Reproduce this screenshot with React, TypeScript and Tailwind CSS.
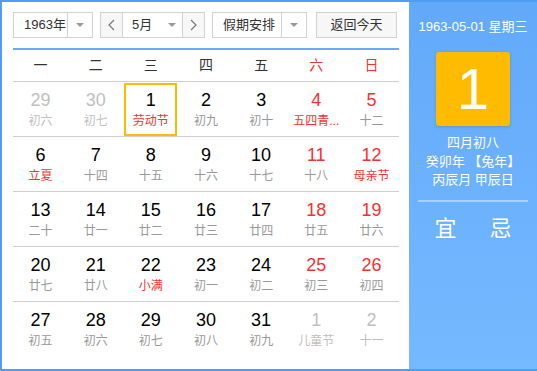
import React from "react";

type Day = {
  d: number;
  lunar: string;
  other?: boolean;
  red?: boolean;
  festival?: boolean;
  selected?: boolean;
};

const weekdays = ["一", "二", "三", "四", "五", "六", "日"];

const rows: Day[][] = [
  [
    { d: 29, lunar: "初六", other: true },
    { d: 30, lunar: "初七", other: true },
    { d: 1, lunar: "劳动节", festival: true, selected: true },
    { d: 2, lunar: "初九" },
    { d: 3, lunar: "初十" },
    { d: 4, lunar: "五四青...", red: true, festival: true },
    { d: 5, lunar: "十二", red: true },
  ],
  [
    { d: 6, lunar: "立夏", festival: true },
    { d: 7, lunar: "十四" },
    { d: 8, lunar: "十五" },
    { d: 9, lunar: "十六" },
    { d: 10, lunar: "十七" },
    { d: 11, lunar: "十八", red: true },
    { d: 12, lunar: "母亲节", red: true, festival: true },
  ],
  [
    { d: 13, lunar: "二十" },
    { d: 14, lunar: "廿一" },
    { d: 15, lunar: "廿二" },
    { d: 16, lunar: "廿三" },
    { d: 17, lunar: "廿四" },
    { d: 18, lunar: "廿五", red: true },
    { d: 19, lunar: "廿六", red: true },
  ],
  [
    { d: 20, lunar: "廿七" },
    { d: 21, lunar: "廿八" },
    { d: 22, lunar: "小满", festival: true },
    { d: 23, lunar: "初一" },
    { d: 24, lunar: "初二" },
    { d: 25, lunar: "初三", red: true },
    { d: 26, lunar: "初四", red: true },
  ],
  [
    { d: 27, lunar: "初五" },
    { d: 28, lunar: "初六" },
    { d: 29, lunar: "初七" },
    { d: 30, lunar: "初八" },
    { d: 31, lunar: "初九" },
    { d: 1, lunar: "儿童节", other: true },
    { d: 2, lunar: "十一", other: true },
  ],
];

const Caret = () => (
  <span className="w-0 h-0 border-x-[4px] border-x-transparent border-t-[4px] border-t-[#9a9a9a]" />
);

function Cell({ day }: { day: Day }) {
  const numColor = day.other
    ? "text-[#bfbfbf]"
    : day.red
    ? "text-[#f73131]"
    : "text-black";
  const lunarColor = day.other
    ? "text-[#bfbfbf]"
    : day.festival
    ? "text-[#f73131]"
    : "text-[#999]";
  return (
    <div className="flex items-center justify-center h-[54px] px-px">
      <div
        className={`flex flex-col items-center justify-center w-full h-[53px] ${
          day.selected ? "border-2 border-[#ffbb00]" : ""
        }`}
      >
        <span className={`text-[18px] leading-[22px] ${numColor}`}>{day.d}</span>
        <span className={`text-[12px] leading-[16px] mt-[2px] ${lunarColor}`}>
          {day.lunar}
        </span>
      </div>
    </div>
  );
}

export default function App() {
  return (
    <div
      className="w-[537px] h-[371px] flex border-y-2 border-l-2 border-[#4e9ef7] bg-white"
      style={{ fontFamily: '"Liberation Sans", "Noto Sans CJK SC", sans-serif' }}
    >
      {/* Left: calendar grid */}
      <div className="w-[407px] pl-[11px] pr-[10px] pt-[10px]">
        <div className="flex items-center h-[26px] text-[13px] text-[#333]">
          <div className="flex w-[80px] h-full border border-[#d2d2d2] bg-white">
            <span className="flex-1 flex items-center pl-[10px]">1963年</span>
            <span className="w-[25px] flex items-center justify-center border-l border-[#d2d2d2]">
              <Caret />
            </span>
          </div>
          <div className="flex w-[105px] h-full ml-[7px] border border-[#d2d2d2] bg-white">
            <span className="w-[22px] flex items-center justify-center bg-[#f7f7f7] border-r border-[#d2d2d2]">
              <svg width="7" height="12" viewBox="0 0 7 12" fill="none" stroke="#777" strokeWidth="1.2">
                <path d="M6 1L1 6l5 5" />
              </svg>
            </span>
            <span className="flex-1 flex items-center pl-[9px]">5月</span>
            <span className="w-[20px] flex items-center justify-center">
              <Caret />
            </span>
            <span className="w-[22px] flex items-center justify-center bg-[#f7f7f7] border-l border-[#d2d2d2]">
              <svg width="7" height="12" viewBox="0 0 7 12" fill="none" stroke="#777" strokeWidth="1.2">
                <path d="M1 1l5 5-5 5" />
              </svg>
            </span>
          </div>
          <div className="flex w-[95px] h-full ml-[7px] border border-[#d2d2d2] bg-white">
            <span className="flex-1 flex items-center pl-[10px]">假期安排</span>
            <span className="w-[25px] flex items-center justify-center border-l border-[#d2d2d2]">
              <Caret />
            </span>
          </div>
          <button className="w-[81px] h-full ml-[9px] border border-[#d2d2d2] bg-[#f7f7f7] text-[13px] text-[#333]">
            返回今天
          </button>
        </div>

        <div className="mt-[10px] border-t-2 border-[#64acf8]">
          <div className="grid grid-cols-7 h-[32px] border-b border-[#cfcfcf] text-[14px]">
            {weekdays.map((w, i) => (
              <span
                key={w}
                className={`flex items-center justify-center ${
                  i >= 5 ? "text-[#f73131]" : "text-[#333]"
                }`}
              >
                {w}
              </span>
            ))}
          </div>
          {rows.map((row, r) => (
            <div
              key={r}
              className={`grid grid-cols-7 ${r < rows.length - 1 ? "border-b border-[#cfcfcf]" : ""}`}
            >
              {row.map((day, i) => (
                <Cell key={i} day={day} />
              ))}
            </div>
          ))}
        </div>
      </div>

      {/* Right: selected day detail */}
      <div className="flex-1 flex flex-col items-center bg-gradient-to-b from-[#62a9fa] to-[#75b9ff] text-white">
        <div className="mt-[16px] text-[13px] leading-[18px]">1963-05-01 星期三</div>
        <div className="mt-[16px] w-[74px] h-[74px] rounded-[3px] bg-[#ffbb00] shadow-[0_1px_3px_rgba(0,0,0,0.15)] flex items-center justify-center">
          <span className="text-[58px] leading-none font-light">1</span>
        </div>
        <div className="mt-[8px] text-[13px] leading-[18.5px] text-center">
          <div>四月初八</div>
          <div>癸卯年 【兔年】</div>
          <div>丙辰月 甲辰日</div>
        </div>
        <div className="mt-[10px] w-[110px] h-[2px] bg-white/40" />
        <div className="mt-[13px] flex w-[110px] justify-around text-[22px] leading-[28px]">
          <span>宜</span>
          <span>忌</span>
        </div>
      </div>
    </div>
  );
}
